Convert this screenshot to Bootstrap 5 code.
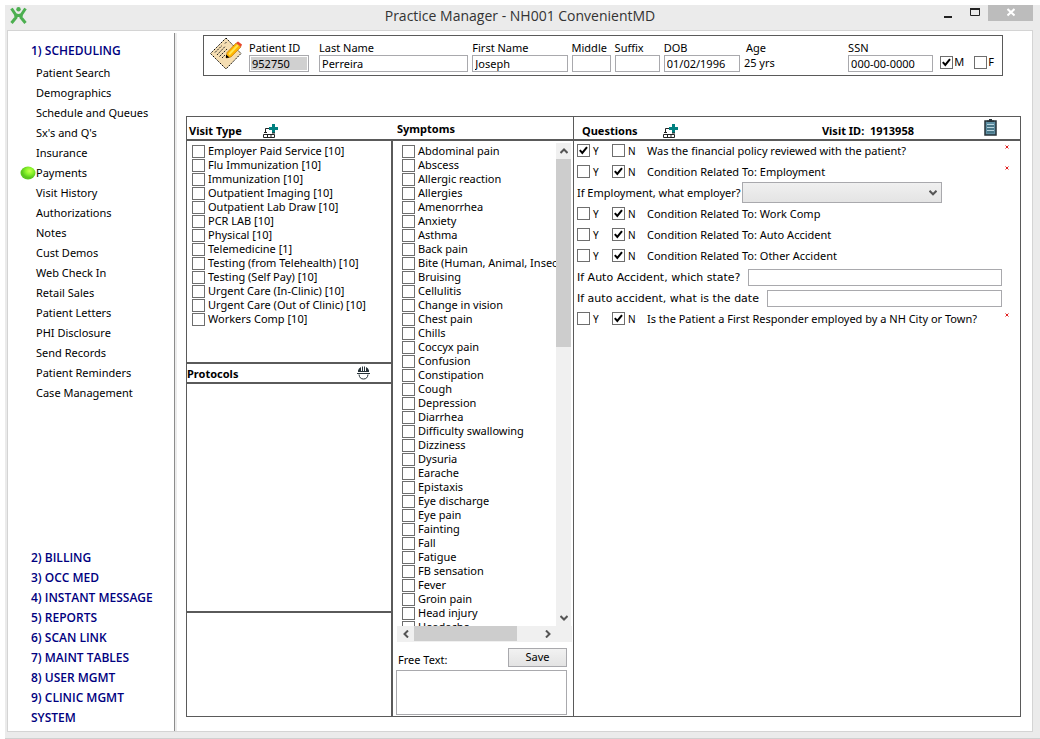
<!DOCTYPE html>
<html lang="en">
<head>
<meta charset="utf-8">
<meta name="viewport" content="width=device-width, initial-scale=1">
<title>Practice Manager - NH001 ConvenientMD</title>
<link href="https://cdn.jsdelivr.net/npm/bootstrap@5.3.0/dist/css/bootstrap.min.css" rel="stylesheet">
<style>
  body { font-family: "Noto Sans", "Open Sans", sans-serif; font-size: 11px; line-height: 14px; color: #000; background: #fff; }
  .app-window { margin: 5px 0 0 5px; height: calc(100vh - 5px); background: #ebebeb; border-bottom: 1px solid #d0d0d0; padding: 0 7px 6px 2px; }
  .title-bar { height: 25px; }
  .title-bar h1 { font-family: "Open Sans", sans-serif; font-size: 14px; line-height: 22px; color: #333; font-weight: 400; }
  .app-logo { left: 3px; top: 2px; }
  .win-controls { top: 0; right: 0; }
  .win-controls button { border: 0; background: none; height: 16px; width: 27px; padding: 0; display: flex; justify-content: center; align-items: center; }
  .win-controls .win-close { width: 45px; background: #bcbcbc; }
  .client { border: 1px solid #d4d4d4; background: #fff; min-height: 0; }
  .side { width: 167px; border-right: 1px solid #8c8c8c; padding: 8px 0 3px 23px; margin-top: 2px; box-shadow: 2px 0 #ececec; }
  .side a { color: #000; text-decoration: none; line-height: 20px; display: block; white-space: nowrap; }
  .side .side-head { color: #000080; font-family: "Open Sans", sans-serif; font-weight: 600; font-size: 12px; }
  .side .side-item { margin: 2px 0 0 5px; }
  .ball { left: -16px; top: 3px; }
  .workspace { padding: 4px 11px 14px 11px; min-width: 0; }
  .patient { border: 1px solid #5a5a5a; height: 41px; margin: 0 18px 40px 17px; padding: 1px 8px 0 6px; }
  .note-ico { margin-right: 7px; }
  .fields { display: grid; grid-template-columns: 66px 149fr 95fr 39fr 45fr 76fr 100fr 85fr; gap: 4px; width: 100%; padding-top: 3px; }
  .fields label, .fields .cap { display: block; height: 15px; line-height: 15px; white-space: nowrap; }
  .age-cap { padding-left: 2px; }
  .sex { margin-left: 7px; padding-bottom: 6px; }
  .sex label { margin: 0 10px 0 1px; }
  .sex label:last-child { margin-right: 0; }
  .box-input { border: 1px solid #a9a9ad; border-radius: 0; background: #fff; height: 17px; width: 100%; padding: 0 2px; font-size: 11px; line-height: 14px; color: #000; display: block; }
  .pid { width: 60px; background: #d0d0d0; box-shadow: inset 0 0 0 1px #fff; }
  .tick { appearance: none; width: 13px; height: 13px; border: 1px solid #6e6e6e; background: #fff center / 11px 11px no-repeat; flex: none; margin: 0; }
  .tick:checked { background-image: url("data:image/svg+xml,%3Csvg xmlns='http://www.w3.org/2000/svg' viewBox='0 0 11 11'%3E%3Cpath d='M1.800 5.200 4.300 8 9 2.200' fill='none' stroke='%23000' stroke-width='2'/%3E%3C/svg%3E"); }
  .board { display: grid; grid-template-columns: 206px 181px 1fr; grid-template-rows: 24px minmax(0, 1fr); border: 1px solid #5a5a5a; min-height: 0; }
  .board h2 { font-size: 11px; font-weight: 700; line-height: 16px; margin: 0; }
  .bar-row { border-bottom: 2px solid #5a5a5a; height: 24px; padding: 4px 2px 0; }
  .rule-right { border-right: 2px solid #5a5a5a; }
  .thin-right { border-right: 1px solid #5a5a5a; }
  .visit-id { padding-right: 70px; }
  .clip-ico { margin: 0 21px 3px 0; }
  .visit-area { height: 221px; padding: 3px 0 0 5px; }
  .row-item { display: flex; align-items: center; height: 14px; gap: 3px; white-space: nowrap; }
  .proto-head { border-top: 2px solid #5a5a5a; border-bottom: 2px solid #5a5a5a; height: 22px; }
  .proto-head h2 { padding-top: 2px; }
  .hat-ico { margin-right: 21px; }
  .proto-foot { border-top: 2px solid #5a5a5a; height: 105px; }
  .symptoms { padding: 2px 1px 1px 3px; }
  .sym-frame { min-height: 0; margin-right: 1px; }
  .sym-list { overflow: hidden; padding: 1px 0 0 6px; min-width: 0; }
  .vbar { width: 15px; background: #f0f0f0; flex: none; }
  .vbar .thumb { height: 188px; background: #cdcdcd; }
  .hbar { height: 16px; background: #f0f0f0; flex: none; margin-left: 1px; }
  .hbar .thumb { width: 103px; height: 15px; background: #cdcdcd; }
  .arrow { width: 17px; height: 16px; display: flex; align-items: center; justify-content: center; }
  .vbar .arrow { width: 15px; }
  .arrow svg { fill: none; stroke: #555; stroke-width: 2; }
  .free-row { height: 25px; margin: 0 5px 3px 2px; }
  .save-btn { width: 59px; height: 19px; border: 1px solid #a9a9ad; border-radius: 0; background: linear-gradient(#f2f2f2, #e3e3e3); padding: 0; font-size: 11px; line-height: 14px; color: #000; }
  .free-box { height: 46px; resize: none; width: 171px; }
  .q-list { padding: 0 18px 0 3px; min-width: 0; }
  .q-row { height: 21px; display: flex; align-items: center; white-space: nowrap; position: relative; }
  .q-pick { padding-bottom: 2px; }
  .q-row .yn { display: flex; align-items: center; gap: 3px; width: 35px; font-size: 10px; }
  .q-row .wide-face { font-family: "DejaVu Sans", sans-serif; }
  .req { right: -7px; top: 4px; }
  .employer { width: 200px; height: 21px; flex: none; margin-left: 1px; border: 1px solid #a9a9ad; border-radius: 0; padding: 0 4px; font-size: 11px; appearance: none; background: url("data:image/svg+xml,%3Csvg xmlns='http://www.w3.org/2000/svg' viewBox='0 0 8 6'%3E%3Cpath d='M.500.800 4 4.300 7.500.800' fill='none' stroke='%23555' stroke-width='2'/%3E%3C/svg%3E") right 4px center / 8px 6px no-repeat, linear-gradient(#f0f0f0, #e4e4e4); }
</style>
</head>
<body>
<div class="app-window d-flex flex-column">
  <header class="title-bar position-relative text-center flex-shrink-0">
    <svg class="app-logo position-absolute" width="17" height="17" viewBox="0 0 17 17" fill="none" stroke="#4caf50" stroke-width="3"><circle cx="8.500" cy="2.300" r="2.200" fill="#4caf50" stroke="none"/><path d="M1.500 1.500 5.500 7.500Q8.500 9.500 11.500 7.500L15.500 1.500M1.500 16 6 10.500 5.500 7.500M15.500 16 11 10.500 11.500 7.500"/></svg>
    <h1 class="m-0">Practice Manager - NH001 ConvenientMD</h1>
    <div class="win-controls position-absolute d-flex">
      <button type="button" aria-label="Minimize"><svg width="10" height="12"><path d="M1 9h8v2H1z" fill="#222"/></svg></button>
      <button type="button" aria-label="Maximize"><svg width="10" height="12"><path d="M.500 2v6.500h9V2z" fill="none" stroke="#222"/><path d="M0 1h10v2H0z" fill="#222"/></svg></button>
      <button type="button" class="win-close" aria-label="Close"><svg width="8" height="12"><path d="M.500 2l7 6.500M7.500 2l-7 6.500" stroke="#fff" stroke-width="2"/></svg></button>
    </div>
  </header>
  <div class="client d-flex flex-grow-1">
    <nav class="side d-flex flex-column justify-content-between flex-shrink-0">
      <div>
        <a href="#" class="side-head">1) SCHEDULING</a>
        <div class="side-item">
          <a href="#">Patient Search</a><a href="#">Demographics</a><a href="#">Schedule and Queues</a><a href="#">Sx's and Q's</a><a href="#">Insurance</a>
          <a href="#" class="position-relative"><svg class="ball position-absolute" width="16" height="14" viewBox="0 0 16 14"><defs><radialGradient id="lime" cx=".6" cy=".35"><stop offset="0" stop-color="#c8ff50"/><stop offset=".5" stop-color="#8cf52c"/><stop offset="1" stop-color="#5cc81e"/></radialGradient></defs><ellipse cx="8" cy="7" rx="7.500" ry="6.500" fill="url(#lime)"/></svg>Payments</a>
          <a href="#">Visit History</a><a href="#">Authorizations</a><a href="#">Notes</a><a href="#">Cust Demos</a><a href="#">Web Check In</a><a href="#">Retail Sales</a><a href="#">Patient Letters</a><a href="#">PHI Disclosure</a><a href="#">Send Records</a><a href="#">Patient Reminders</a><a href="#">Case Management</a>
        </div>
      </div>
      <div>
        <a href="#" class="side-head">2) BILLING</a><a href="#" class="side-head">3) OCC MED</a><a href="#" class="side-head">4) INSTANT MESSAGE</a><a href="#" class="side-head">5) REPORTS</a><a href="#" class="side-head">6) SCAN LINK</a><a href="#" class="side-head">7) MAINT TABLES</a><a href="#" class="side-head">8) USER MGMT</a><a href="#" class="side-head">9) CLINIC MGMT</a><a href="#" class="side-head">SYSTEM</a>
      </div>
    </nav>
    <main class="workspace d-flex flex-column flex-grow-1">
      <section class="patient d-flex flex-shrink-0">
        <svg class="note-ico flex-shrink-0" width="32" height="33" viewBox="0 0 32 33"><path d="M16 1 31 16.500 16 32 .500 16.500z" fill="#f5deb3" stroke="#000" stroke-dasharray="1.500 1"/><path d="M5 15.500 12 8.500M7 18 15.500 9M9.500 19.500 17 12M12 21 15 18M15 6.500l2-2" stroke="#222" stroke-dasharray="2 1"/><path d="M17 15.500 26 6l5 4-10 10-5 1z" fill="#ffb400" stroke="#a55b00" stroke-width=".5"/><path d="M19 17.500 28 8" stroke="#ffe650" stroke-width="2"/><path d="M26 6l2-1.500 4 3L31 10z" fill="#e8472b"/><path d="M16 17.500l3.500 3L16 21z"/></svg>
        <div class="fields">
          <div><label for="pid">Patient ID</label><input id="pid" class="box-input pid" value="952750" readonly></div>
          <div><label for="last">Last Name</label><input id="last" class="box-input" value="Perreira"></div>
          <div><label for="first">First Name</label><input id="first" class="box-input" value="Joseph"></div>
          <div><label for="mid">Middle</label><input id="mid" class="box-input"></div>
          <div><label for="suf">Suffix</label><input id="suf" class="box-input"></div>
          <div><label for="dob">DOB</label><input id="dob" class="box-input" value="01/02/1996"></div>
          <div><span class="cap age-cap">Age</span><span class="cap">25 yrs</span></div>
          <div><label for="ssn">SSN</label><input id="ssn" class="box-input" value="000-00-0000"></div>
        </div>
        <div class="sex d-flex align-items-end flex-shrink-0">
          <input type="checkbox" class="tick" id="male" checked><label for="male">M</label>
          <input type="checkbox" class="tick" id="female"><label for="female">F</label>
        </div>
      </section>
      <section class="board flex-grow-1">
        <div class="bar-row d-flex align-items-end">
          <h2 class="me-3">Visit Type</h2>
          <svg class="ms-1" width="16" height="16" viewBox="0 0 16 16"><path d="M10 1h3v3h3v3h-3v3h-3V7H7V4h3z" fill="#008080"/><path d="M7 5.500H3.500v4M10 10h3M1.500 11.500h11v3h-11zM5.500 11.500v3M9 11.500v3M2 9.500h3" fill="none" stroke="#222"/></svg>
        </div>
        <div class="bar-row thin-right ps-1"><h2>Symptoms</h2></div>
        <div class="bar-row d-flex align-items-end ps-2">
          <h2>Questions</h2>
          <svg class="ms-4" width="16" height="16" viewBox="0 0 16 16"><path d="M10 1h3v3h3v3h-3v3h-3V7H7V4h3z" fill="#008080"/><path d="M7 5.500H3.500v4M10 10h3M1.500 11.500h11v3h-11zM5.500 11.500v3M9 11.500v3M2 9.500h3" fill="none" stroke="#222"/></svg>
          <h2 class="ms-auto visit-id">Visit ID:&nbsp; 1913958</h2>
          <svg class="clip-ico" width="13" height="17" viewBox="0 0 13 17"><path d="M1 2h11v14H1z" fill="#5d8fa3" stroke="#263238" stroke-width="1.500"/><path d="M3 3V1.500h2V0h3v1.500h2V3z" fill="#263238"/><path d="M3 5.500h7M3 8.500h7M3 11.500h7" stroke="#b8d4df"/><path d="M3 7h7M3 10h7M3 13h7" stroke="#37606f"/></svg>
        </div>

        <div class="d-flex flex-column rule-right">
          <div class="visit-area" id="visits"></div>
          <div class="proto-head d-flex align-items-center justify-content-between"><h2>Protocols</h2>
            <svg class="hat-ico" width="13" height="14" viewBox="0 0 13 14"><path d="M1 6V4.500Q1.500 2 4 1v4h1V.500h1V5h1V.500h1V5h1V1q2.500 1 3 3.500V6z" fill="#263238"/><path d="M0 7.500h13" stroke="#263238"/><path d="M2 8.500q.500 4.500 4.500 4.500T11 8.500" fill="none" stroke="#263238"/></svg></div>
          <div class="flex-grow-1"></div>
          <div class="proto-foot"></div>
        </div>

        <div class="symptoms thin-right d-flex flex-column">
          <div class="d-flex flex-grow-1 sym-frame">
            <div class="sym-list flex-grow-1" id="symptoms"></div>
            <div class="vbar d-flex flex-column">
              <span class="arrow"><svg width="8" height="6"><path d="M.500 5 4 1.500 7.500 5"/></svg></span>
              <div class="thumb"></div>
              <span class="arrow mt-auto"><svg width="8" height="6"><path d="M.500 1 4 4.500 7.500 1"/></svg></span>
            </div>
          </div>
          <div class="hbar d-flex">
            <span class="arrow"><svg width="6" height="8"><path d="M5 .500 1.500 4 5 7.500"/></svg></span>
            <div class="thumb"></div>
            <span class="arrow ms-auto me-3"><svg width="6" height="8"><path d="M1 .500 4.500 4 1 7.500"/></svg></span>
          </div>
          <div class="d-flex justify-content-between align-items-end free-row">
            <label for="free">Free Text:</label>
            <button type="button" class="btn save-btn">Save</button>
          </div>
          <textarea id="free" class="box-input free-box"></textarea>
        </div>

        <div class="q-list" id="questions"></div>
      </section>
    </main>
  </div>
</div>
<script src="https://cdn.jsdelivr.net/npm/bootstrap@5.3.0/dist/js/bootstrap.bundle.min.js"></script>
<script>
  const visits = ["Employer Paid Service [10]", "Flu Immunization [10]", "Immunization [10]", "Outpatient Imaging [10]", "Outpatient Lab Draw [10]", "PCR LAB [10]", "Physical [10]", "Telemedicine [1]", "Testing (from Telehealth) [10]", "Testing (Self Pay) [10]", "Urgent Care (In-Clinic) [10]", "Urgent Care (Out of Clinic) [10]", "Workers Comp [10]"];
  const symptoms = ["Abdominal pain", "Abscess", "Allergic reaction", "Allergies", "Amenorrhea", "Anxiety", "Asthma", "Back pain", "Bite (Human, Animal, Insect)", "Bruising", "Cellulitis", "Change in vision", "Chest pain", "Chills", "Coccyx pain", "Confusion", "Constipation", "Cough", "Depression", "Diarrhea", "Difficulty swallowing", "Dizziness", "Dysuria", "Earache", "Epistaxis", "Eye discharge", "Eye pain", "Fainting", "Fall", "Fatigue", "FB sensation", "Fever", "Groin pain", "Head injury", "Headache"];
  const rows = (items, key) => items.map((t, i) => `<div class="row-item"><input type="checkbox" class="tick" id="${key}${i}"><label for="${key}${i}">${t}</label></div>`).join("");
  document.getElementById("visits").innerHTML = rows(visits, "v");
  document.getElementById("symptoms").innerHTML = rows(symptoms, "s");

  // Each yes/no question: text, answer, required
  const req = `<svg class="req position-absolute" width="4" height="4" viewBox="0 0 4 4"><path d="M.500.500l3 3M3.500.500l-3 3" stroke="#e02020"/></svg>`;
  const yn = (t, a, r, i) => `<div class="q-row q-pick"><span class="yn"><input type="checkbox" class="tick" id="y${i}" ${a === "Y" ? "checked" : ""}><label for="y${i}">Y</label></span><span class="yn"><input type="checkbox" class="tick" id="n${i}" ${a === "N" ? "checked" : ""}><label for="n${i}">N</label></span><span>${t}</span>${r ? req : ""}</div>`;
  const text = (t, id) => `<div class="q-row"><label for="${id}" class="wide-face flex-shrink-0 me-2">${t}</label><input id="${id}" class="box-input"></div>`;
  document.getElementById("questions").innerHTML =
    yn("Was the financial policy reviewed with the patient?", "Y", true, 1) +
    yn("Condition Related To: Employment", "N", true, 2) +
    `<div class="q-row q-pick"><label for="employer">If Employment, what employer?</label><select id="employer" class="employer"><option></option></select></div>` +
    yn("Condition Related To: Work Comp", "N", false, 3) +
    yn("Condition Related To: Auto Accident", "N", false, 4) +
    yn("Condition Related To: Other Accident", "N", false, 5) +
    text("If Auto Accident, which state?", "state") +
    text("If auto accident, what is the date", "date") +
    yn("Is the Patient a First Responder employed by a NH City or Town?", "N", true, 6);
</script>
</body>
</html>
